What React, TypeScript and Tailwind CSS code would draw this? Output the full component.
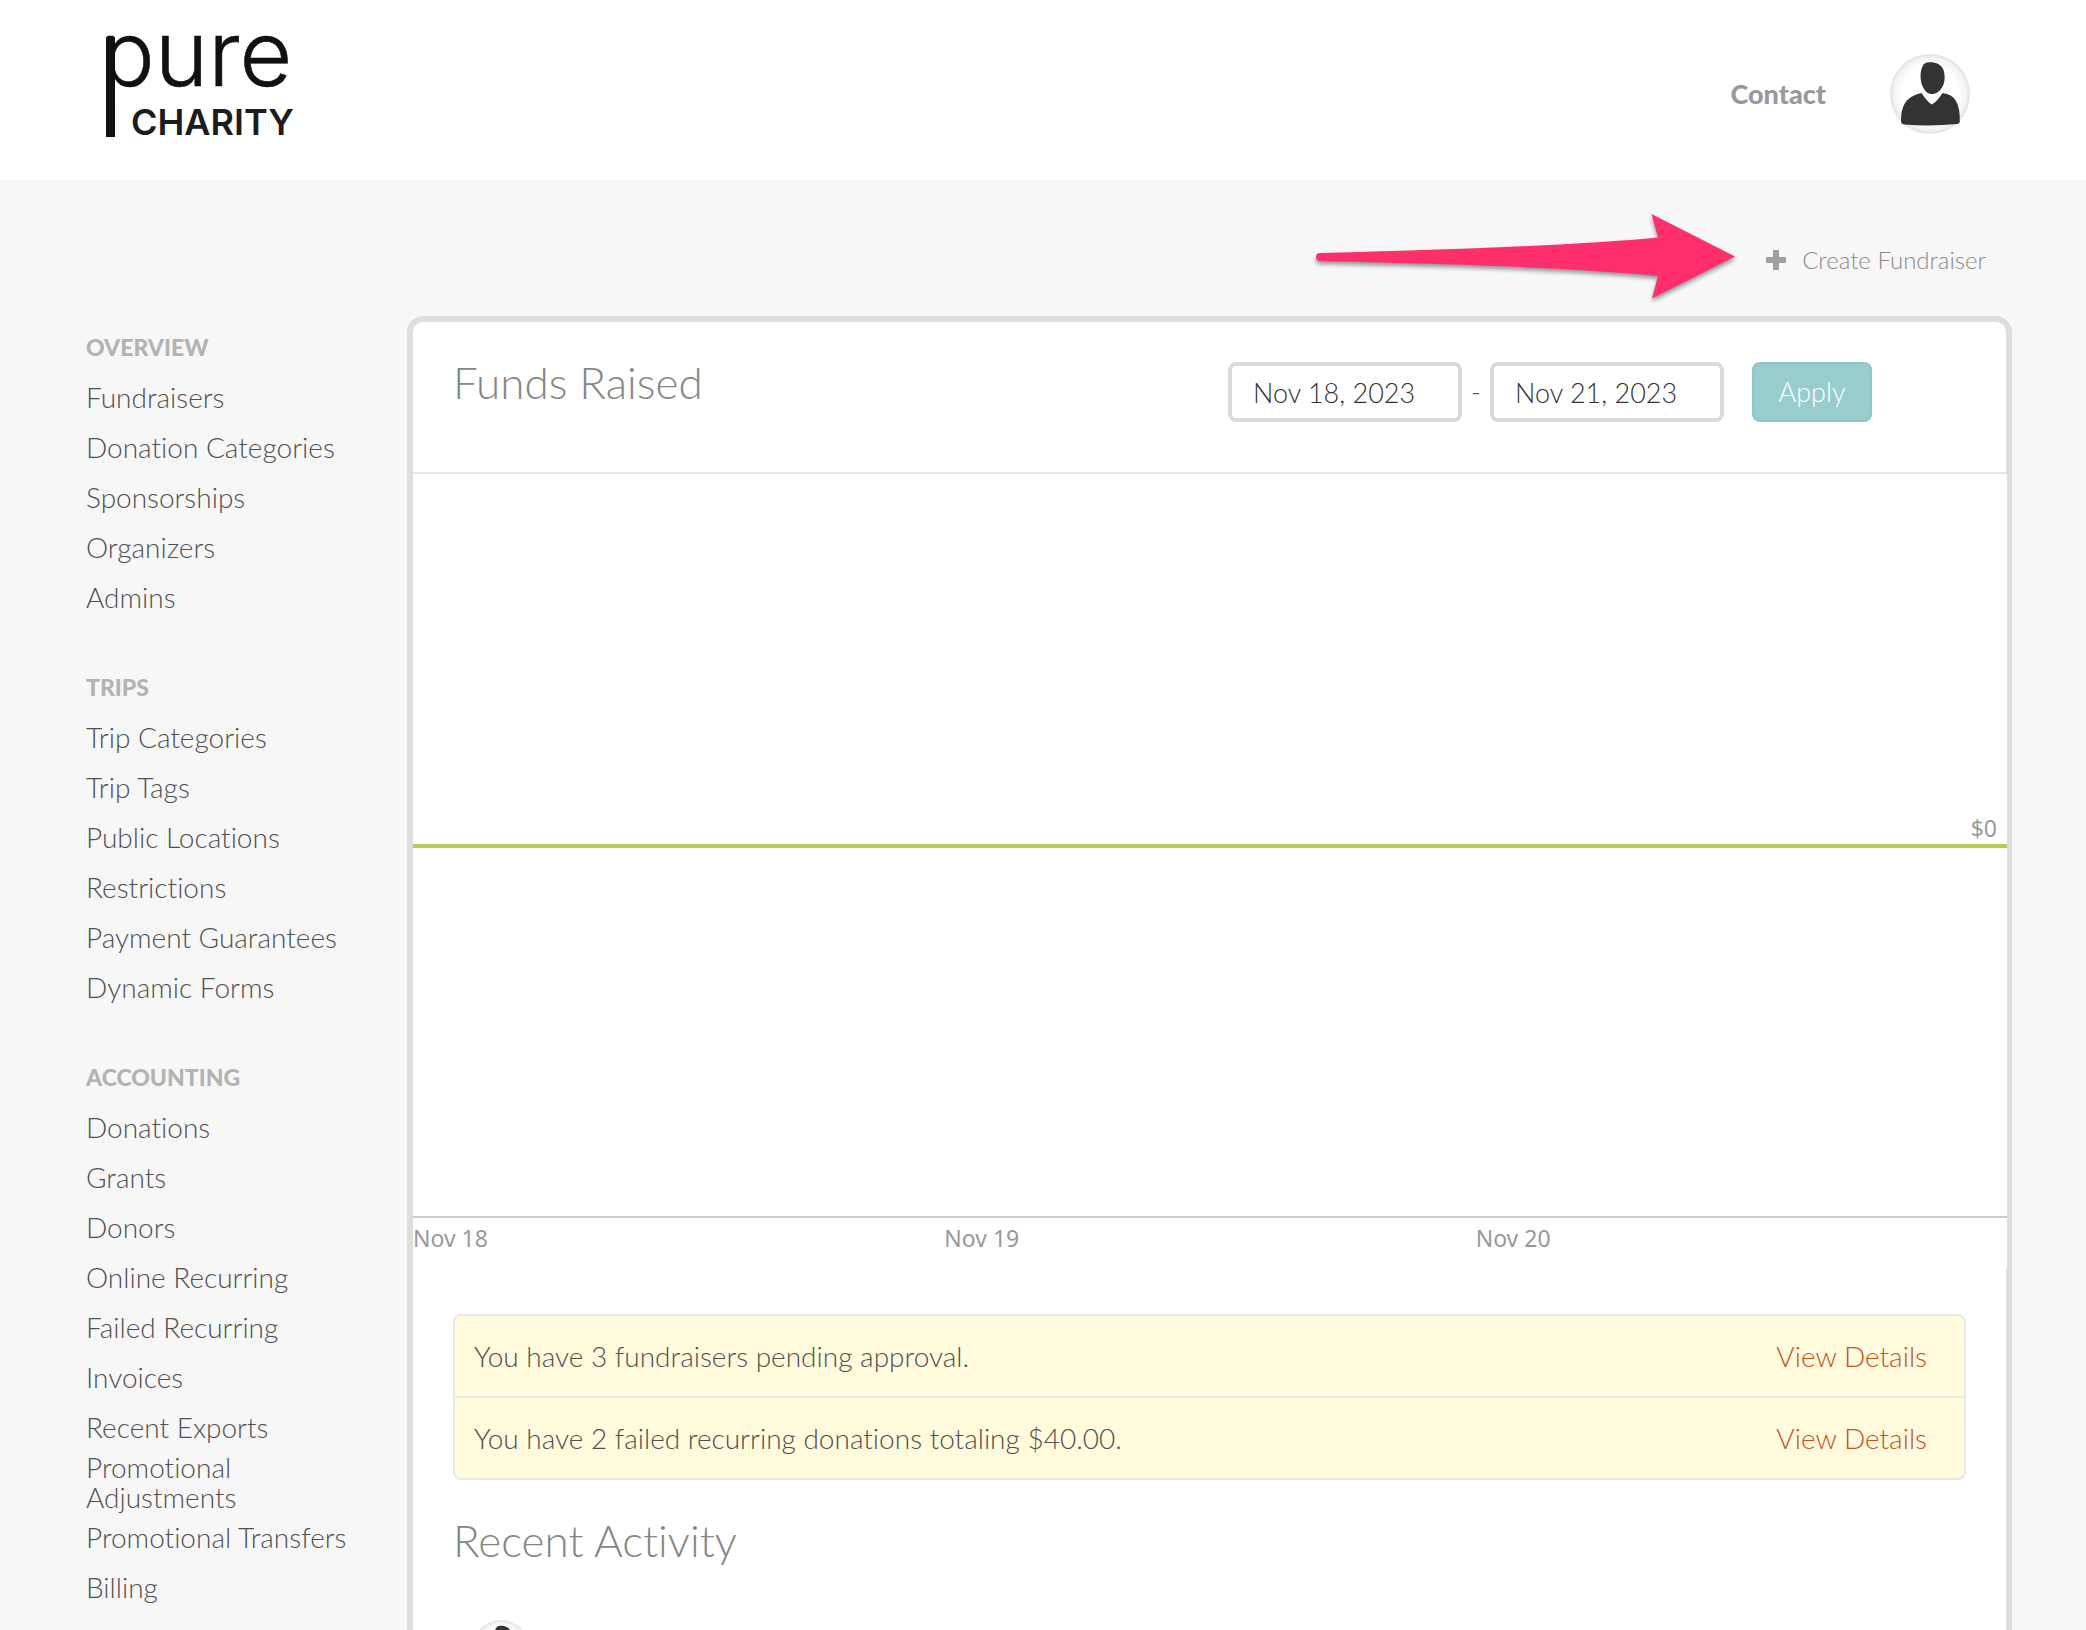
import React, { useState } from "react";

interface NavSection {
  title: string;
  items: string[];
}

interface Alert {
  id: number;
  message: string;
}

const SECTIONS: NavSection[] = [
  {
    title: "OVERVIEW",
    items: ["Fundraisers", "Donation Categories", "Sponsorships", "Organizers", "Admins"],
  },
  {
    title: "TRIPS",
    items: ["Trip Categories", "Trip Tags", "Public Locations", "Restrictions", "Payment Guarantees", "Dynamic Forms"],
  },
  {
    title: "ACCOUNTING",
    items: [
      "Donations",
      "Grants",
      "Donors",
      "Online Recurring",
      "Failed Recurring",
      "Invoices",
      "Recent Exports",
      "Promotional Adjustments",
      "Promotional Transfers",
      "Billing",
    ],
  },
];

const ALERTS: Alert[] = [
  { id: 1, message: "You have 3 fundraisers pending approval." },
  { id: 2, message: "You have 2 failed recurring donations totaling $40.00." },
];

const DAYS = ["Nov 18", "Nov 19", "Nov 20"];

function Logo() {
  return (
    <svg
      width="188"
      height="114"
      viewBox="0 0 188 114"
      className="overflow-visible"
      role="img"
      aria-label="Pure Charity"
    >
      <rect x="0" y="0" width="9" height="100" fill="#111" />
      <text x="-6" y="49" fill="#111" stroke="#111" strokeWidth="0.6" className="font-['Inter'] text-[91px]">
        pure
      </text>
      <text x="25" y="98" fill="#1c1c1c" className="font-['Inter'] text-[36px] font-semibold">
        CHARITY
      </text>
    </svg>
  );
}

function Avatar({ className }: { className: string }) {
  return (
    <svg className={className} viewBox="0 0 80 80" aria-hidden="true">
      <defs>
        <radialGradient id="avatar-rim">
          <stop offset="0.7" stopColor="#fff" />
          <stop offset="0.9" stopColor="#f4f4f4" />
          <stop offset="1" stopColor="#e0e0e0" />
        </radialGradient>
      </defs>
      <circle cx="40" cy="40" r="40" fill="url(#avatar-rim)" />
      <path
        d="M37 8.500C44 7.500 51 9.500 53.500 16C55.500 23 55 30 51 35C48 39 45 40 41.500 40C37 40 34 36 32 31C30 25 30 17 32.500 12.500C33.500 10 35 8.800 37 8.500Z"
        fill="#333"
      />
      <path
        d="M31.500 39L35 44Q38 48 41.700 50.500Q46 48 49 44L52.500 39Q62 40 66 47Q70 54 69.800 67Q70 69.500 67 70Q41 72.500 14 70.500Q11 70 11 67Q11 55 15 49Q20 41.500 31.500 39Z"
        fill="#333"
      />
    </svg>
  );
}

function Arrow() {
  return (
    <svg
      width="430"
      height="100"
      viewBox="0 0 430 100"
      className="drop-shadow-[0_3px_2px_rgba(0,0,0,0.4)]"
      aria-hidden="true"
    >
      <path
        d="M8 43Q250 37 346 27.500L339.500 4L423 46.500L340 88.500L346 66Q250 56 8 51Q4 51 4 47Q4 43 8 43Z"
        fill="#ff2f6d"
      />
    </svg>
  );
}

function Sidebar() {
  return (
    <nav className="w-[321px] shrink-0 pt-[6px] pr-8" aria-label="Organization">
      {SECTIONS.map((section) => (
        <div key={section.title} className="mb-10">
          <h2 className="flex h-[50px] items-center text-[23px] font-black text-[#b3b3b3]">{section.title}</h2>
          <ul>
            {section.items.map((item) => (
              <li key={item} className="flex min-h-[50px] items-center leading-[30px]">
                <a href="#" className="hover:underline">
                  {item}
                </a>
              </li>
            ))}
          </ul>
        </div>
      ))}
    </nav>
  );
}

function Chart() {
  return (
    // overlaps the card border by one pixel on the right
    <div className="-mr-px bg-white pb-[13px] font-['Noto_Sans',sans-serif] text-[23px] leading-8 font-normal text-[#999]">
      <div className="flex h-[370px] items-end justify-end pr-[10px]">$0</div>
      <div className="h-1 bg-[#b5cd50]" />
      <div className="h-[368px]" />
      <div className="grid grid-cols-3 border-t-2 border-[#ccc] pt-1">
        {DAYS.map((day) => (
          <span key={day}>{day}</span>
        ))}
      </div>
    </div>
  );
}

export default function App() {
  const [from, setFrom] = useState("Nov 18, 2023");
  const [to, setTo] = useState("Nov 21, 2023");

  const dateInput =
    "h-[60px] w-[234px] rounded-lg border-4 border-[#dadada] bg-white px-[21px] text-[#333] outline-none";

  return (
    <div className="h-screen overflow-hidden bg-[#f7f7f7] font-['Lato',sans-serif] text-[28px] font-light text-[#505050] [font-variant-ligatures:none]">
      <header className="flex h-[180px] items-center justify-between bg-white pt-2 pr-[116px] pl-[106px]">
        <a href="#">
          <Logo />
        </a>
        <div className="flex items-center gap-16">
          <a href="#" className="text-[27px] font-black text-[#999]">
            Contact
          </a>
          <button type="button" aria-label="Account">
            <Avatar className="size-20" />
          </button>
        </div>
      </header>

      <div className="pr-[74px] pl-[86px]">
        {/* Toolbar */}
        <div className="flex h-[136px] items-center justify-end gap-6 pt-6 pr-[26px]">
          <Arrow />
          <a href="#" className="flex items-center gap-4 text-[24px] text-[#8a8a8a]">
            <svg width="20" height="20" viewBox="0 0 20 20" aria-hidden="true">
              <path
                d="M8 0h4a1 1 0 0 1 1 1v6h6a1 1 0 0 1 1 1v4a1 1 0 0 1-1 1h-6v6a1 1 0 0 1-1 1h-4a1 1 0 0 1-1-1v-6h-6a1 1 0 0 1-1-1v-4a1 1 0 0 1 1-1h6v-6a1 1 0 0 1 1-1z"
                fill="#a0a0a0"
              />
            </svg>
            Create Fundraiser
          </a>
        </div>

        <div className="flex">
          <Sidebar />

          <main className="min-w-0 grow rounded-2xl border-[6px] border-[#dedede] bg-white">
            <div className="flex h-[152px] items-start justify-between border-b-2 border-[#e8e8e8] pt-10 pr-[134px] pl-10">
              <h1 className="text-[44px] leading-10 text-[#868686]">Funds Raised</h1>
              <form className="flex items-center gap-7 text-[27px]" onSubmit={(e) => e.preventDefault()}>
                <div className="flex items-center gap-[9px]">
                  <input
                    aria-label="Start date"
                    className={dateInput}
                    value={from}
                    onChange={(e) => setFrom(e.target.value)}
                  />
                  <span>-</span>
                  <input
                    aria-label="End date"
                    className={dateInput}
                    value={to}
                    onChange={(e) => setTo(e.target.value)}
                  />
                </div>
                <button
                  type="submit"
                  className="h-[60px] w-[120px] rounded-lg border-2 border-[#8ec4c4] bg-[#99cccc] text-white"
                >
                  Apply
                </button>
              </form>
            </div>

            <Chart />

            <div className="px-10 pt-[47px]">
              <ul className="divide-y-2 divide-[#e8e8e8] rounded-lg border-2 border-[#e8e8e8] bg-[#fffbdc]">
                {ALERTS.map((alert) => (
                  <li key={alert.id} className="flex h-[82px] items-center justify-between pr-[37px] pl-[19px] last:h-20">
                    <span>{alert.message}</span>
                    <a href="#" className="text-[#c4531c]">
                      View Details
                    </a>
                  </li>
                ))}
              </ul>

              <h2 className="mt-10 text-[44px] leading-10 text-[#868686]">Recent Activity</h2>
              <div className="mt-[60px] pl-5">
                <Avatar className="size-14" />
              </div>
            </div>
          </main>
        </div>
      </div>
    </div>
  );
}
